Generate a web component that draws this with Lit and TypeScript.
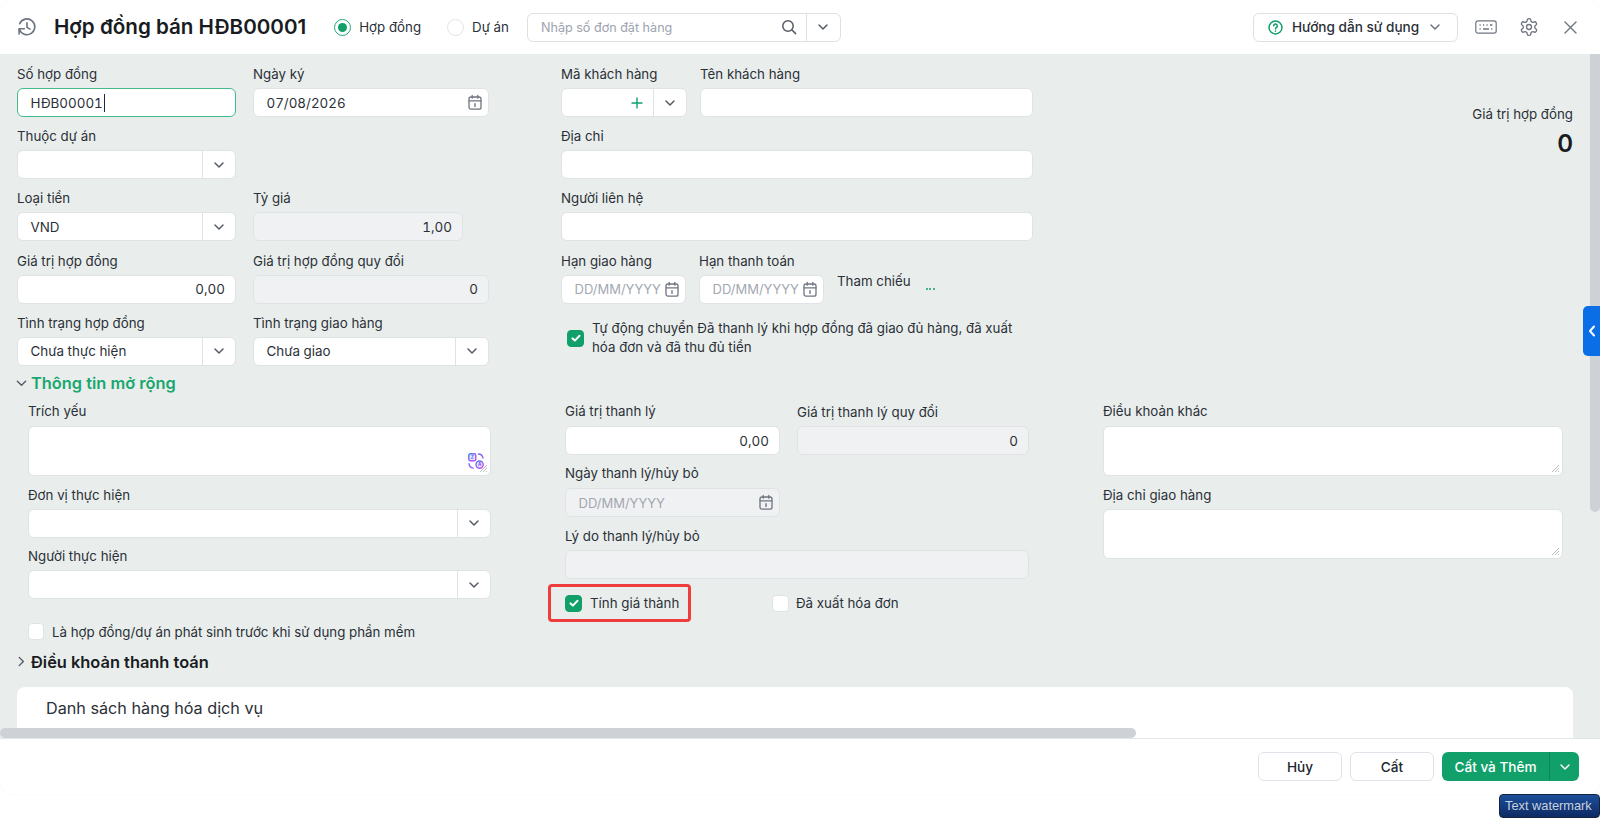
import { LitElement, html, css, svg } from 'lit';
import { customElement } from 'lit/decorators.js';

const chevronDown = html`<svg class="chev" width="12" height="12" viewBox="0 0 12 12" fill="none" stroke="currentColor" stroke-width="1.5" stroke-linecap="round" stroke-linejoin="round"><path d="M2 4l4 4 4-4" /></svg>`;

const calendar = html`<svg width="16" height="17" viewBox="0 0 16 17" fill="none" stroke="#6f7580" stroke-width="1.3" stroke-linecap="round">
	<rect x="2" y="3" width="12" height="12.2" rx="2" />
	<path d="M2 6.8h12M5.2 1.4v2.8M10.8 1.4v2.8" />
	<path d="M8 9.8v2.6" stroke-width="1.4" />
</svg>`;

const check = html`<svg width="12" height="12" viewBox="0 0 12 12" fill="none" stroke="#fff" stroke-width="2" stroke-linecap="round" stroke-linejoin="round"><path d="M2.5 6.4l2.4 2.2 4.6-4.8" /></svg>`;

const translateIcon = html`<svg class="translate" width="16" height="16" viewBox="0 0 16 16" fill="none">
	<defs>
		<linearGradient id="tg" x1="0" y1="0" x2="1" y2="1">
			<stop offset="0" stop-color="#3b82f6" />
			<stop offset="1" stop-color="#d946ef" />
		</linearGradient>
	</defs>
	<rect x=".8" y=".8" width="7" height="7" rx="1.6" fill="#e4e6fd" stroke="url(#tg)" stroke-width="1.4" />
	<circle cx="11.6" cy="11.6" r="3.6" fill="#f1e4fd" stroke="url(#tg)" stroke-width="1.4" />
	${svg`<text x="4.3" y="6" font-size="4.6" text-anchor="middle" fill="#4f6ef0" font-family="Inter, sans-serif" font-weight="700">Z</text>`}
	${svg`<text x="11.6" y="13.3" font-size="4.6" text-anchor="middle" fill="#7c4ff0" font-family="Inter, sans-serif" font-weight="700">A</text>`}
	<path d="M10.4 1c2.4.1 4.2 1.5 4.6 4M1 10.6c.2 2.3 1.7 4.1 4.2 4.5" stroke="url(#tg)" stroke-width="1.4" stroke-linecap="round" />
</svg>`;

@customElement('app-root')
export class AppRoot extends LitElement {
	static styles = css`
		:host {
			display: block;
			height: 818px;
			overflow: hidden;
			position: relative;
			background: #fff;
			font-family: Inter, 'Noto Sans', sans-serif;
			font-size: 13.3px;
			line-height: 20px;
			color: #2b3038;
		}

		* {
			box-sizing: border-box;
		}

		.dialog {
			height: 794px;
			background: #fff;
			border-radius: 12px;
			display: flex;
			flex-direction: column;
			overflow: hidden;
			box-shadow: 0 0 2px rgba(0, 0, 0, 0.06);
			position: relative;
		}

		/* header */
		.header {
			height: 54px;
			flex: none;
			display: flex;
			align-items: center;
			padding: 0 23px 0 17px;
		}

		.title {
			font-size: 20.6px;
			line-height: 30px;
			font-weight: 600;
			color: #181c22;
			margin-left: 17px;
			margin-right: 28px;
		}

		.radio {
			display: flex;
			align-items: center;
			gap: 8px;
			margin-right: 26px;
		}

		.radio-dot {
			width: 17px;
			height: 17px;
			border-radius: 50%;
			border: 1px solid #e1e4e8;
			background: #fff;
			display: flex;
			align-items: center;
			justify-content: center;
		}

		.radio-dot.on {
			border: 1.5px solid #1fa873;
		}

		.radio-dot.on::after {
			content: '';
			width: 9px;
			height: 9px;
			border-radius: 50%;
			background: #12a06a;
		}

		.search {
			width: 314px;
			height: 29px;
			margin-left: -8px;
			display: flex;
			align-items: center;
			border: 1px solid #dde0e4;
			border-radius: 6px;
			background: #fff;
		}

		.search-text {
			flex: 1;
			padding: 1px 0 0 13px;
			color: #9ca3af;
			font-size: 12.6px;
		}

		.search-icon {
			margin-right: 9px;
		}

		.search-arrow {
			width: 34px;
			height: 100%;
			border-left: 1px solid #dde0e4;
			display: flex;
			align-items: center;
			justify-content: center;
			color: #555b65;
		}

		.tools {
			margin-left: auto;
			display: flex;
			align-items: center;
		}

		.help {
			width: 205px;
			height: 29px;
			border: 1px solid #dde0e4;
			border-radius: 6px;
			display: flex;
			align-items: center;
			padding-left: 14px;
			gap: 9px;
			font-size: 13.6px;
			font-weight: 500;
			margin-right: 17px;
		}

		.help .chev {
			margin-left: 1px;
			color: #6b7280;
		}

		.gear {
			margin: 0 25px 0 22px;
		}

		/* body */
		.body {
			flex: 1;
			min-height: 0;
			background: #e9eeec;
			padding: 10px 27px 0 17px;
			overflow: hidden;
			position: relative;
		}

		.top {
			display: flex;
			height: 307px;
		}

		.top-left {
			width: 472px;
			margin-right: 72px;
		}

		.top-mid {
			width: 472px;
		}

		.top-value {
			flex: 1;
			text-align: right;
			padding-top: 40px;
		}

		.total {
			font-size: 24px;
			line-height: 40px;
			font-weight: 600;
			color: #181c22;
		}

		.row {
			display: flex;
			gap: 17px;
			margin-bottom: 9.2px;
		}

		.mid-row {
			gap: 13px;
		}

		.flat {
			margin-bottom: 0;
		}

		.field {
			display: flex;
			flex-direction: column;
			width: 100%;
			min-width: 0;
		}

		.w219 {
			width: 219px;
			flex: none;
		}

		.w236 {
			width: 236px;
			flex: none;
		}

		.w210 {
			width: 210px;
			flex: none;
		}

		.w125 {
			width: 125px;
			flex: none;
		}

		.w126 {
			width: 126px;
			flex: none;
		}

		.w215 {
			width: 215px;
			flex: none;
		}

		.w232 {
			width: 232px;
			flex: none;
		}

		.label {
			height: 20px;
			margin-bottom: 4px;
			white-space: nowrap;
		}

		.input {
			height: 29px;
			border: 1px solid #dfe3e6;
			border-radius: 6px;
			background: #fff;
			display: flex;
			align-items: center;
			padding-left: 12.5px;
			white-space: nowrap;
			position: relative;
			font-variant-numeric: tabular-nums;
			font-size: 13.4px;
		}

		.input.focus {
			border-color: #45b98a;
		}

		.caret {
			width: 1px;
			height: 18px;
			background: #1f2937;
			margin-left: 1px;
		}

		.input.right {
			justify-content: flex-end;
			padding-right: 10px;
		}

		.input.disabled {
			background: #f0f1f3;
		}

		.input.date {
			padding-right: 5px;
			justify-content: space-between;
		}

		.placeholder {
			color: #a3a8b1;
			font-size: 13px;
		}

		.input .value {
			flex: 1;
		}

		.arrow {
			width: 33px;
			height: 100%;
			flex: none;
			border-left: 1px solid #dfe3e6;
			display: flex;
			align-items: center;
			justify-content: center;
			color: #555b65;
		}

		.input.select {
			padding-right: 0;
		}

		.plus {
			color: #12a06a;
			margin-right: 10px;
		}

		.area {
			height: 50px;
			align-items: flex-start;
		}

		.grip {
			position: absolute;
			right: 2px;
			bottom: 2px;
		}

		.translate {
			position: absolute;
			right: 6px;
			bottom: 6px;
		}

		.ref {
			display: flex;
			gap: 15px;
			padding: 20px 0 0 0;
			white-space: nowrap;
		}

		.dots {
			display: flex;
			gap: 1.5px;
			align-items: center;
			padding-top: 4px;
		}

		.dots i {
			width: 2px;
			height: 2px;
			background: #12a06a;
			border-radius: 50%;
		}

		.check-row {
			display: flex;
			align-items: center;
			gap: 8px;
		}

		.auto {
			padding: 6px 0 0 6px;
			width: 462px;
			line-height: 19.5px;
		}

		.box {
			width: 17px;
			height: 17px;
			flex: none;
			border-radius: 4px;
			border: 1px solid #dfe3e6;
			background: #fff;
			display: flex;
			align-items: center;
			justify-content: center;
		}

		.box.on {
			background: #12a06a;
			border-color: #12a06a;
		}

		/* sections */
		.section {
			height: 24px;
			display: flex;
			align-items: center;
			gap: 4px;
			font-size: 16.4px;
			line-height: 24px;
			font-weight: 600;
			color: #181c22;
			margin-left: -1px;
		}

		.section.open {
			color: #1aa770;
		}

		.section svg {
			color: #555b65;
			flex: none;
		}

		.extra {
			display: grid;
			grid-template-columns: 463px 464px 460px;
			column-gap: 74px;
			padding-left: 11px;
			margin-top: 7px;
		}

		.extra .label {
			line-height: 18px;
		}

		.stack {
			display: flex;
			flex-direction: column;
			gap: 8.5px;
		}

		.stack.tight {
			gap: 9px;
		}

		.stack .field + .field .label {
			line-height: 20px;
		}

		.prior {
			margin-top: 14px;
			gap: 8px;
		}

		.prior .box {
			width: 16px;
		}

		.marks {
			display: flex;
			align-items: center;
			margin: -4px 0 0 -17px;
			gap: 81px;
		}

		.marked {
			width: 143px;
			height: 38px;
			border: 3px solid #ef3d3d;
			border-radius: 4px;
			padding-left: 14px;
		}

		.plain {
			gap: 7px;
		}

		.terms {
			margin-top: 8px;
		}

		.card {
			margin-top: 13px;
			height: 60px;
			background: #fff;
			border-radius: 8px 8px 0 0;
			padding: 11px 0 0 29px;
			font-size: 16.2px;
		}

		/* scrollbars */
		.scroll-v {
			position: absolute;
			right: 0;
			top: 0;
			width: 10px;
			height: 458px;
			background: #ced1d5;
			border-radius: 0 0 5px 5px;
		}

		.scroll-h {
			position: absolute;
			left: 0;
			bottom: 0;
			width: 1136px;
			height: 10px;
			background: #ced1d5;
			border-radius: 5px;
		}

		.tab {
			position: absolute;
			right: 0;
			top: 252px;
			width: 17px;
			height: 50px;
			background: #0a6fe6;
			border-radius: 5px 0 0 5px;
			display: flex;
			align-items: center;
			justify-content: center;
		}

		/* footer */
		.footer {
			height: 56px;
			flex: none;
			display: flex;
			align-items: center;
			justify-content: flex-end;
			gap: 8px;
			padding-right: 21px;
			border-top: 1px solid #e3e6e8;
			font-size: 13.6px;
		}

		.btn {
			width: 84px;
			height: 29px;
			border: 1.5px solid #e0e2ea;
			border-radius: 6px;
			display: flex;
			align-items: center;
			justify-content: center;
			font-weight: 500;
			color: #20252c;
		}

		.primary {
			width: 137px;
			height: 29px;
			display: flex;
			background: #12a06a;
			color: #fff;
			border-radius: 6px;
			font-weight: 500;
		}

		.primary-main {
			flex: 1;
			display: flex;
			align-items: center;
			justify-content: center;
		}

		.primary-arrow {
			width: 30px;
			border-left: 1px solid #0d8558;
			display: flex;
			align-items: center;
			justify-content: center;
		}

		.watermark {
			position: absolute;
			right: 0;
			bottom: 0;
			width: 101px;
			height: 24px;
			background: linear-gradient(#1c4f9c, #0d2a63);
			border: 1px solid #16233f;
			border-radius: 4px;
			color: #c9d1de;
			font-family: 'Liberation Sans', Arial, sans-serif;
			font-size: 12.8px;
			line-height: 22px;
			padding-left: 5px;
			white-space: nowrap;
		}
	`;

	field(label: string, control: unknown, cls = '') {
		return html`<div class="field ${cls}">
			<div class="label">${label}</div>
			${control}
		</div>`;
	}

	text(value = '') {
		return html`<div class="input"><span>${value}</span></div>`;
	}

	number(value: string, disabled = false) {
		return html`<div class="input right ${disabled ? 'disabled' : ''}">${value}</div>`;
	}

	select(value = '') {
		return html`<div class="input select">
			<span class="value">${value}</span>
			<div class="arrow">${chevronDown}</div>
		</div>`;
	}

	date(value: string, disabled = false) {
		return html`<div class="input date ${disabled ? 'disabled' : ''}">
			<span class="${value === 'DD/MM/YYYY' ? 'placeholder' : ''}">${value}</span>
			${calendar}
		</div>`;
	}

	grip() {
		return html`<svg class="grip" width="9" height="9" viewBox="0 0 9 9" stroke="#b9bdc2" stroke-width="1"><path d="M1 8l7-7M4 8l4-4M7 8l1-1" /></svg>`;
	}

	renderHeader() {
		return html`<div class="header">
			<svg width="20" height="20" viewBox="0 0 24 24" fill="none" stroke="#6b7280" stroke-width="1.9" stroke-linecap="round" stroke-linejoin="round">
				<path d="M3.2 8A9.5 9.5 0 1 1 2.8 14.5" />
				<path d="M2.5 20.5v-6.4h6.4" />
				<path d="M12 7v5.5l3.5 2" />
			</svg>
			<div class="title">Hợp đồng bán HĐB00001</div>
			<div class="radio"><span class="radio-dot on"></span>Hợp đồng</div>
			<div class="radio"><span class="radio-dot"></span>Dự án</div>
			<div class="search">
				<span class="search-text">Nhập số đơn đặt hàng</span>
				<svg class="search-icon" width="16" height="16" viewBox="0 0 16 16" fill="none" stroke="#555b65" stroke-width="1.5" stroke-linecap="round">
					<circle cx="7" cy="7" r="5.2" />
					<path d="M11 11l3.6 3.6" />
				</svg>
				<div class="search-arrow">${chevronDown}</div>
			</div>
			<div class="tools">
				<div class="help">
					<svg width="15" height="15" viewBox="0 0 16 16" fill="none" stroke="#12a06a" stroke-width="1.6" stroke-linecap="round">
						<circle cx="8" cy="8" r="6.9" />
						<path d="M6 6.2a2 2 0 1 1 3 1.8c-.7.4-1 .8-1 1.5" />
						<path d="M8 11.8v.1" />
					</svg>
					Hướng dẫn sử dụng ${chevronDown}
				</div>
				<svg width="22" height="14" viewBox="0 0 22 14" fill="none" stroke="#6f7580" stroke-width="1.2">
					<rect x=".8" y=".8" width="20.4" height="12.4" rx="2.2" />
					<path d="M4.5 5h1.2M8 5h1.2M11.5 5h1.2M15 5h2.4M4.5 9h1.2M8 9h6M16.2 9h1.2" stroke-width="1.4" />
				</svg>
				<svg class="gear" width="20" height="20" viewBox="0 0 24 24" fill="none" stroke="#6f7580" stroke-width="1.6" stroke-linecap="round" stroke-linejoin="round">
					<path d="M12.22 2h-.44a2 2 0 0 0-2 2v.18a2 2 0 0 1-1 1.73l-.43.25a2 2 0 0 1-2 0l-.15-.08a2 2 0 0 0-2.73.73l-.22.38a2 2 0 0 0 .73 2.73l.15.1a2 2 0 0 1 1 1.72v.51a2 2 0 0 1-1 1.74l-.15.09a2 2 0 0 0-.73 2.73l.22.38a2 2 0 0 0 2.73.73l.15-.08a2 2 0 0 1 2 0l.43.25a2 2 0 0 1 1 1.73V20a2 2 0 0 0 2 2h.44a2 2 0 0 0 2-2v-.18a2 2 0 0 1 1-1.73l.43-.25a2 2 0 0 1 2 0l.15.08a2 2 0 0 0 2.73-.73l.22-.39a2 2 0 0 0-.73-2.73l-.15-.08a2 2 0 0 1-1-1.74v-.5a2 2 0 0 1 1-1.74l.15-.09a2 2 0 0 0 .73-2.73l-.22-.38a2 2 0 0 0-2.73-.73l-.15.08a2 2 0 0 1-2 0l-.43-.25a2 2 0 0 1-1-1.73V4a2 2 0 0 0-2-2z" />
					<circle cx="12" cy="12" r="3" />
				</svg>
				<svg width="13" height="13" viewBox="0 0 13 13" fill="none" stroke="#6f7580" stroke-width="1.4" stroke-linecap="round"><path d="M1 1l11 11M12 1L1 12" /></svg>
			</div>
		</div>`;
	}

	renderTop() {
		return html`<div class="top">
			<div class="top-left">
				<div class="row">
					${this.field('Số hợp đồng', html`<div class="input focus">HĐB00001<span class="caret"></span></div>`, 'w219')}
					${this.field('Ngày ký', this.date('07/08/2026'), 'w236')}
				</div>
				<div class="row">${this.field('Thuộc dự án', this.select(), 'w219')}</div>
				<div class="row">
					${this.field('Loại tiền', this.select('VND'), 'w219')}
					${this.field('Tỷ giá', this.number('1,00', true), 'w210')}
				</div>
				<div class="row">
					${this.field('Giá trị hợp đồng', this.number('0,00'), 'w219')}
					${this.field('Giá trị hợp đồng quy đổi', this.number('0', true), 'w236')}
				</div>
				<div class="row">
					${this.field('Tình trạng hợp đồng', this.select('Chưa thực hiện'), 'w219')}
					${this.field('Tình trạng giao hàng', this.select('Chưa giao'), 'w236')}
				</div>
			</div>
			<div class="top-mid">
				<div class="row mid-row">
					${this.field(
						'Mã khách hàng',
						html`<div class="input select">
							<span class="value"></span>
							<svg class="plus" width="12" height="12" viewBox="0 0 12 12" stroke="currentColor" stroke-width="1.4"><path d="M6 .5v11M.5 6h11" /></svg>
							<div class="arrow">${chevronDown}</div>
						</div>`,
						'w126'
					)}
					${this.field('Tên khách hàng', this.text())}
				</div>
				<div class="row">${this.field('Địa chỉ', this.text())}</div>
				<div class="row">${this.field('Người liên hệ', this.text())}</div>
				<div class="row mid-row">
					${this.field('Hạn giao hàng', this.date('DD/MM/YYYY'), 'w125')}
					${this.field('Hạn thanh toán', this.date('DD/MM/YYYY'), 'w125')}
					<div class="ref">Tham chiếu <span class="dots"><i></i><i></i><i></i></span></div>
				</div>
				<div class="check-row auto">
					<span class="box on">${check}</span>
					<span>Tự động chuyển Đã thanh lý khi hợp đồng đã giao đủ hàng, đã xuất<br />hóa đơn và đã thu đủ tiền</span>
				</div>
			</div>
			<div class="top-value">
				<div>Giá trị hợp đồng</div>
				<div class="total">0</div>
			</div>
		</div>`;
	}

	renderExtra() {
		return html`<div class="extra">
			<div class="stack">
				${this.field('Trích yếu', html`<div class="input area">${translateIcon}${this.grip()}</div>`)}
				${this.field('Đơn vị thực hiện', this.select())}
				${this.field('Người thực hiện', this.select())}
				<div class="check-row prior">
					<span class="box"></span>
					<span>Là hợp đồng/dự án phát sinh trước khi sử dụng phần mềm</span>
				</div>
			</div>
			<div class="stack tight">
				<div class="row flat">
					${this.field('Giá trị thanh lý', this.number('0,00'), 'w215')}
					${this.field('Giá trị thanh lý quy đổi', this.number('0', true), 'w232')}
				</div>
				${this.field('Ngày thanh lý/hủy bỏ', this.date('DD/MM/YYYY', true), 'w215')}
				${this.field('Lý do thanh lý/hủy bỏ', html`<div class="input disabled"></div>`)}
				<div class="marks">
					<div class="check-row marked"><span class="box on">${check}</span>Tính giá thành</div>
					<div class="check-row plain"><span class="box"></span>Đã xuất hóa đơn</div>
				</div>
			</div>
			<div class="stack">
				${this.field('Điều khoản khác', html`<div class="input area">${this.grip()}</div>`)}
				${this.field('Địa chỉ giao hàng', html`<div class="input area">${this.grip()}</div>`)}
			</div>
		</div>`;
	}

	render() {
		return html`<div class="dialog">
				${this.renderHeader()}
				<div class="body">
					${this.renderTop()}
					<div class="section open">
						<svg width="11" height="11" viewBox="0 0 12 12" fill="none" stroke="currentColor" stroke-width="1.5" stroke-linecap="round" stroke-linejoin="round"><path d="M1.5 3.5l4.5 4.5 4.5-4.5" /></svg>
						Thông tin mở rộng
					</div>
					${this.renderExtra()}
					<div class="section terms">
						<svg width="11" height="11" viewBox="0 0 12 12" fill="none" stroke="currentColor" stroke-width="1.5" stroke-linecap="round" stroke-linejoin="round"><path d="M3.5 1.5L8 6l-4.5 4.5" /></svg>
						Điều khoản thanh toán
					</div>
					<div class="card">Danh sách hàng hóa dịch vụ</div>
					<div class="scroll-v"></div>
					<div class="scroll-h"></div>
					<div class="tab">
						<svg width="8" height="12" viewBox="0 0 8 12" fill="none" stroke="#fff" stroke-width="2" stroke-linecap="round" stroke-linejoin="round"><path d="M6 1.5L2 6l4 4.5" /></svg>
					</div>
				</div>
				<div class="footer">
					<div class="btn">Hủy</div>
					<div class="btn">Cất</div>
					<div class="primary">
						<div class="primary-main">Cất và Thêm</div>
						<div class="primary-arrow">${chevronDown}</div>
					</div>
				</div>
			</div>
			<div class="watermark">Text watermark</div>`;
	}
}
